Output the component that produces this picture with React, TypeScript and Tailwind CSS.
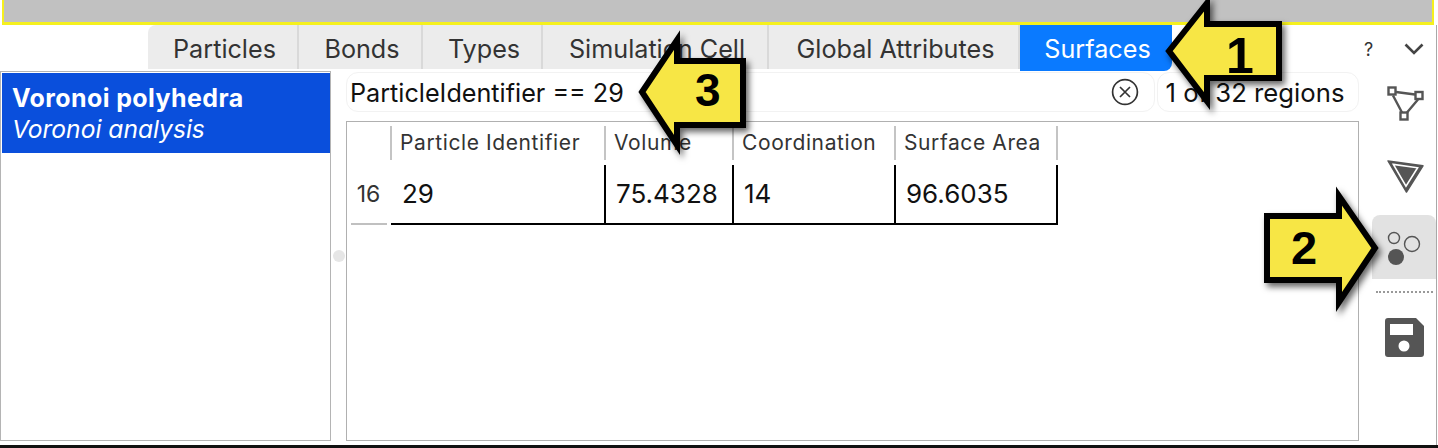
import type { ReactNode } from "react";

const tabs = [
  { label: "Particles", width: "w-[151px]" },
  { label: "Bonds", width: "w-[124px]" },
  { label: "Types", width: "w-[120px]" },
  { label: "Simulation Cell", width: "w-[226px]" },
  { label: "Global Attributes", width: "w-[251px]" },
];

const columns = [
  { label: "Particle Identifier", value: "29", headWidth: "w-[214px]", width: "w-[213px]" },
  { label: "Volume", value: "75.4328", headWidth: "w-[128px]", width: "w-[128px]" },
  { label: "Coordination", value: "14", headWidth: "w-[162px]", width: "w-[162px]" },
  { label: "Surface Area", value: "96.6035", headWidth: "w-[162px]", width: "w-[162px]" },
];

// yellow callout arrow, lies over the window content
function Callout({ className, points, children }: { className: string; points: string; children: ReactNode }) {
  return (
    <div className={`absolute ${className}`}>
      <svg width="130" height="124" viewBox="0 0 130 124" className="absolute left-0 top-0 overflow-visible drop-shadow-[3px_4px_3px_rgba(0,0,0,0.6)]">
        <polygon points={points} fill="#f7e645" stroke="#000" strokeWidth="6" strokeLinejoin="miter" />
      </svg>
      {children}
    </div>
  );
}

function App() {
  return (
    <div className="relative flex h-[448px] w-[1438px] flex-col overflow-hidden bg-white font-['Inter',sans-serif] text-[#222]">

      {/* viewport strip */}
      <div className="ml-[2px] mr-[4px] h-[25px] shrink-0 border-x-[2px] border-b-[3px] border-x-[#f5f01e] border-b-[#f5f01e] bg-[#c1c1c1]" />

      <div className="mr-[1px] flex min-h-0 flex-1 border-r border-[#a8a8a8]">

        <div className="flex min-w-0 flex-1 flex-col">

          {/* tabs */}
          <div className="flex h-[46px] shrink-0 pl-[148px]">
            {tabs.map((tab) => (
              <div key={tab.label} className={`flex h-[44px] items-center justify-center border-r-2 border-[#d9d9d9] bg-[#ececec] pl-[4px] pt-[5px] text-[25.2px] text-[#333] first:rounded-tl-lg ${tab.width}`}>
                {tab.label}
              </div>
            ))}
            <div className="flex h-[46px] w-[152px] items-center justify-center rounded-br-lg bg-[#0a7aff] pl-[3px] pt-[3px] text-[25.2px] text-white">
              Surfaces
            </div>
          </div>

          <div className="flex min-h-0 flex-1">

            {/* pipeline list */}
            <div className="h-[370px] w-[331px] shrink-0 border border-[#b4b4b4] pl-[1px] pt-[1px]">
              <div className="h-[80px] bg-[#0a4fdc] pl-[10px] pt-[9px] text-white">
                <div className="text-[25px] leading-[32px] font-bold tracking-[0.4px]">Voronoi polyhedra</div>
                <div className="text-[24.6px] leading-[31px] italic">Voronoi analysis</div>
              </div>
            </div>

            {/* splitter */}
            <div className="flex w-[15px] shrink-0 items-center justify-center pb-[5px]">
              <div className="h-3 w-3 rounded-full bg-[#e6e6e6]" />
            </div>

            <div className="flex w-[1013px] shrink-0 flex-col">

              {/* filter row */}
              <div className="flex h-[41px] shrink-0 gap-[2px] pt-[1px]">
                <div className="flex h-[40px] w-[809px] items-center justify-between rounded-xl border border-[#f2f2f2] pl-[3px] pr-[15px] text-[25.2px] text-[#111]">
                  <span className="pt-[4px]">ParticleIdentifier == 29</span>
                  <svg width="28" height="28" viewBox="0 0 28 28" fill="none" stroke="#333" strokeWidth="1.7">
                    <circle cx="14" cy="14" r="12.4" />
                    <path d="M9 9l10 10M19 9L9 19" />
                  </svg>
                </div>
                <div className="flex h-[40px] w-[202px] items-center justify-center rounded-xl border border-[#f2f2f2] pt-[2px] pr-[6px] text-[25.7px] text-[#111]">
                  1 of 32 regions
                </div>
              </div>

              {/* table */}
              <div className="mt-[9px] h-[320px] border border-[#b0b0b0] pt-[4px]">
                <div className="flex">
                  <div className="w-[43px] shrink-0" />
                  {columns.map((col) => (
                    <div key={col.label} className={`shrink-0 ${col.headWidth}`}>
                      <div className="flex h-[34px] items-center border-l-2 border-[#c4c4c4] pl-[8px] text-[21px] tracking-[0.6px] text-[#333] whitespace-nowrap">
                        {col.label}
                      </div>
                    </div>
                  ))}
                  <div className="h-[34px] border-l-2 border-[#c4c4c4]" />
                </div>
                <div className="mt-[5px] flex">
                  <div className="flex h-[60px] w-[44px] shrink-0 flex-col items-center pr-[1px]">
                    <div className="flex h-[58px] w-[36px] items-center justify-center text-[23px] text-[#333]">16</div>
                    <div className="h-[2px] w-[36px] bg-[#c0c0c0]" />
                  </div>
                  <div className="flex h-[60px] border-b-2 border-black">
                    {columns.map((col) => (
                      <div key={col.label} className={`flex shrink-0 items-center pb-[2px] pl-[10px] text-[26px] text-[#111] not-first:border-l-2 not-first:border-black first:pl-[11px] ${col.width}`}>
                        {col.value}
                      </div>
                    ))}
                    <div className="border-l-2 border-black" />
                  </div>
                </div>
              </div>

            </div>

            <div className="min-w-0 flex-1" />
          </div>
        </div>

        {/* right tool column */}
        <div className="flex w-[76px] shrink-0 flex-col items-end text-[#555]">
          <div className="flex h-[46px] w-full items-center justify-between pl-[4px] pr-[12px]">
            <span className="pt-[3px] text-[18px] text-[#333]">?</span>
            <svg width="20" height="12" viewBox="0 0 20 12" fill="none" stroke="#444" strokeWidth="2.6" className="mt-[2px]">
              <path d="M1.500 1.500L10 10l8.500-8.500" />
            </svg>
          </div>
          <div className="flex h-[58px] w-full items-start justify-center pl-[14px] pt-[15px]">
            <svg width="37" height="35" viewBox="0 0 37 35" fill="none" stroke="#555" strokeWidth="2.4">
              <rect x="1.500" y="1.500" width="7" height="7" />
              <rect x="28.500" y="6" width="7" height="7" />
              <rect x="13.500" y="26.500" width="7" height="7" />
              <path d="M9 6l19 2.500M6 9.500l9 17M31 13.500L20 26.500" />
            </svg>
          </div>
          <div className="flex h-[86px] w-full items-start justify-center pl-[14px] pt-[31px]">
            <svg width="37" height="33" viewBox="0 0 38 34" fill="none">
              <path d="M1 1l36 5-17 27z" fill="#555" stroke="#555" strokeWidth="1.500" strokeLinejoin="round" />
              <path d="M6.500 4.500L31.500 8 19.500 27z" stroke="#fff" strokeWidth="1.600" />
            </svg>
          </div>
          <div className="flex h-[64px] w-[64px] items-center justify-center rounded-t-lg bg-[#e2e2e2] pt-[1px]">
            <svg width="34" height="34" viewBox="0 0 34 34" fill="none">
              <circle cx="7" cy="7" r="5.500" stroke="#555" strokeWidth="1.400" />
              <circle cx="25" cy="13" r="7.500" stroke="#555" strokeWidth="1.400" />
              <circle cx="9" cy="26" r="8" fill="#555" />
            </svg>
          </div>
          <div className="mt-[12px] mr-[3px] h-0 w-[57px] border-t-2 border-dotted border-[#999]" />
          <div className="flex w-full justify-center pl-[13px] pt-[25px]">
            <svg width="39" height="39" viewBox="0 0 39 39">
              <path fillRule="evenodd" fill="#555" d="M3 0h28l8 8v28a3 3 0 0 1-3 3H3a3 3 0 0 1-3-3V3a3 3 0 0 1 3-3zM5 6v11h23V6zM19 22.500a5.500 5.500 0 1 0 0 11 5.500 5.500 0 0 0 0-11z" />
            </svg>
          </div>
        </div>
      </div>

      <div className="h-[3px] shrink-0 bg-[#111]" />

      {/* numbered callouts */}
      <Callout className="left-[1166px] top-0 h-[104px] w-[116px]" points="3,51 41,3 41,24 113,24 113,78 41,78 41,101">
        <span className="absolute left-[60px] top-[31px] font-['Liberation_Sans',sans-serif] text-[50px] leading-[50px] font-bold text-black">1</span>
      </Callout>
      <Callout className="left-[1265px] top-[193px] h-[112px] w-[113px]" points="2,23 74,23 74,3 110,55 74,109 74,87 2,87">
        <span className="absolute left-[26px] top-[30px] font-['Liberation_Sans',sans-serif] text-[47px] leading-[50px] font-bold text-black">2</span>
      </Callout>
      <Callout className="left-[640px] top-[37px] h-[111px] w-[106px]" points="2,55 37,3 37,24 103,24 103,88 37,88 37,108">
        <span className="absolute left-[55px] top-[28px] font-['Liberation_Sans',sans-serif] text-[46px] leading-[50px] font-bold text-black">3</span>
      </Callout>
    </div>
  );
}

export default App;
